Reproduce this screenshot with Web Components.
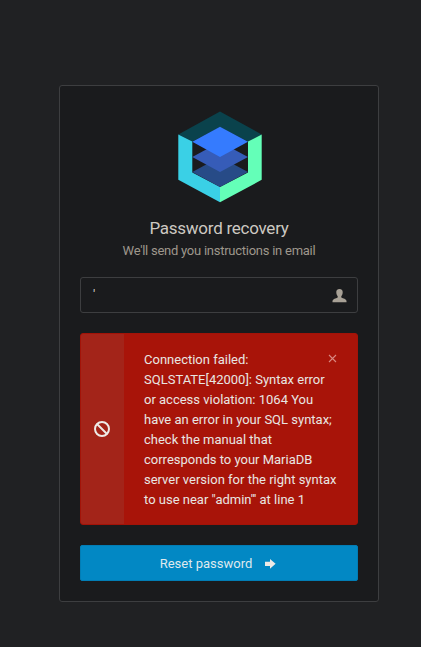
<!DOCTYPE html>
<html lang="en"><head><meta charset="utf-8"><title>Password recovery</title>
<style>
html,body{margin:0;height:100%}
body{background:#202123;font:13px/20px Roboto,"Liberation Sans",sans-serif;color:#c9c5be;overflow:hidden}
</style></head><body>
<recovery-page>
<recovery-card>
<brand-logo></brand-logo>
<card-heading><span slot="title">Password recovery</span>We'll send you instructions in email</card-heading>
<email-field>'</email-field>
<error-alert>Connection failed: SQLSTATE[42000]: Syntax error or access violation: 1064 You have an error in your SQL syntax; check the manual that corresponds to your MariaDB server version for the right syntax to use near "admin''' at line 1</error-alert>
<submit-button>Reset password</submit-button>
</recovery-card>
</recovery-page>
<script>
const define=(name,html)=>customElements.define(name,class extends HTMLElement{
  constructor(){super();this.attachShadow({mode:'open'}).innerHTML=html;}
});
define('recovery-page',`<style>:host{display:block;padding:85px 0 0 59px;box-sizing:border-box;height:100%}</style><slot></slot>`);
define('recovery-card',`<style>:host{display:flex;flex-direction:column;box-sizing:border-box;width:320px;height:517px;padding:20px;border:1px solid #3d3e40;border-radius:3px;background:#1a1b1d}</style><slot></slot>`);
define('brand-logo',`<style>:host{display:flex;justify-content:center;padding:5px 0 0 2px;height:92px}svg{display:block}</style>
<svg width="86" height="92" viewBox="0 0 86 92">
<path fill="#0a424c" d="M43 .5 84.7 23.5 71 30.5 43 16 15.3 30.5 1.3 23.5Z"/>
<path fill="#3ad0e6" d="M1.3 23.5 15.3 30.5V61.5L43 76V91.3L1.3 68.8Z"/>
<path fill="#64ffb8" d="M84.7 23.5 71 30.5V61.5L43 76V91.3L84.7 68.8Z"/>
<path fill="#274b87" d="M43 46 71 61 43 76 15.3 61Z"/>
<path fill="#365cb8" d="M43 31 71 46 43 61 15.3 46Z"/>
<path fill="#357bfe" d="M43 15.8 71 30.8 43 46 15.3 30.8Z"/>
</svg>`);
define('card-heading',`<style>:host{display:block;text-align:center;margin-top:13px;color:#9e978c;letter-spacing:-.255px}h1{margin:0;font-size:17px;line-height:24px;font-weight:400;color:#cdc9c2}p{margin:1px 0 0;line-height:20px}</style><h1><slot name="title"></slot></h1><p><slot></slot></p>`);
define('email-field',`<style>:host{display:flex;align-items:center;justify-content:space-between;box-sizing:border-box;height:36px;flex:none;margin-top:16px;padding:0 10px 0 12px;border:1px solid #3d3e40;border-radius:3px;color:#d6d2cc}svg{display:block;margin-top:1px}</style>
<span><slot></slot></span><svg width="15" height="14" viewBox="0 0 15 14"><path fill="#a8a196" d="M7.5 0C9.7 0 10.9 1.4 10.7 3.6 10.6 5.5 10 6.4 9.3 7.2V8.6C11.3 9.5 14.2 10.2 14.5 11.8V13.3H.5V11.8C.8 10.2 3.7 9.5 5.7 8.6V7.2C5 6.4 4.4 5.5 4.3 3.6 4.1 1.4 5.3 0 7.5 0Z"/></svg>`);
define('error-alert',`<style>:host{display:flex;box-sizing:border-box;height:192px;flex:none;margin-top:20px;background:#a81409;border:1px solid #a31308;border-radius:3px;overflow:hidden;color:#e8e6e3}
.badge{width:43px;flex:none;background:#a32419;display:flex;align-items:center;justify-content:center;box-sizing:border-box;padding-right:1px}
.text{width:195px;flex:none;padding:16px 0 14px 20px}
.close{margin:20px 0 0 -11px;width:9px;height:9px;flex:none}svg{display:block}</style>
<div class="badge"><svg width="16" height="16" viewBox="0 0 16 16"><g fill="none" stroke="#eeeae6" stroke-width="2"><circle cx="8" cy="8" r="7"/><path d="M3 3 13 13"/></g></svg></div>
<div class="text"><slot></slot></div>
<svg class="close" viewBox="0 0 9 9"><path d="M1 1 8 8M8 1 1 8" stroke="#d98780" stroke-width="1.1"/></svg>`);
define('submit-button',`<style>:host{display:flex;align-items:center;justify-content:center;box-sizing:border-box;height:36px;flex:none;margin-top:20px;padding:2px 2px 0 0;background:#0288c4;border:1px solid #027db5;border-radius:2px;color:#dfe9ee}svg{display:block;margin:-1px 0 0 13px}</style><slot></slot>
<svg width="11" height="10" viewBox="0 0 11 10"><path fill="#eeeae6" d="M0 2.7H5V0L10.6 4.8 5 9.8V7H0Z"/></svg>`);
</script></body></html>
